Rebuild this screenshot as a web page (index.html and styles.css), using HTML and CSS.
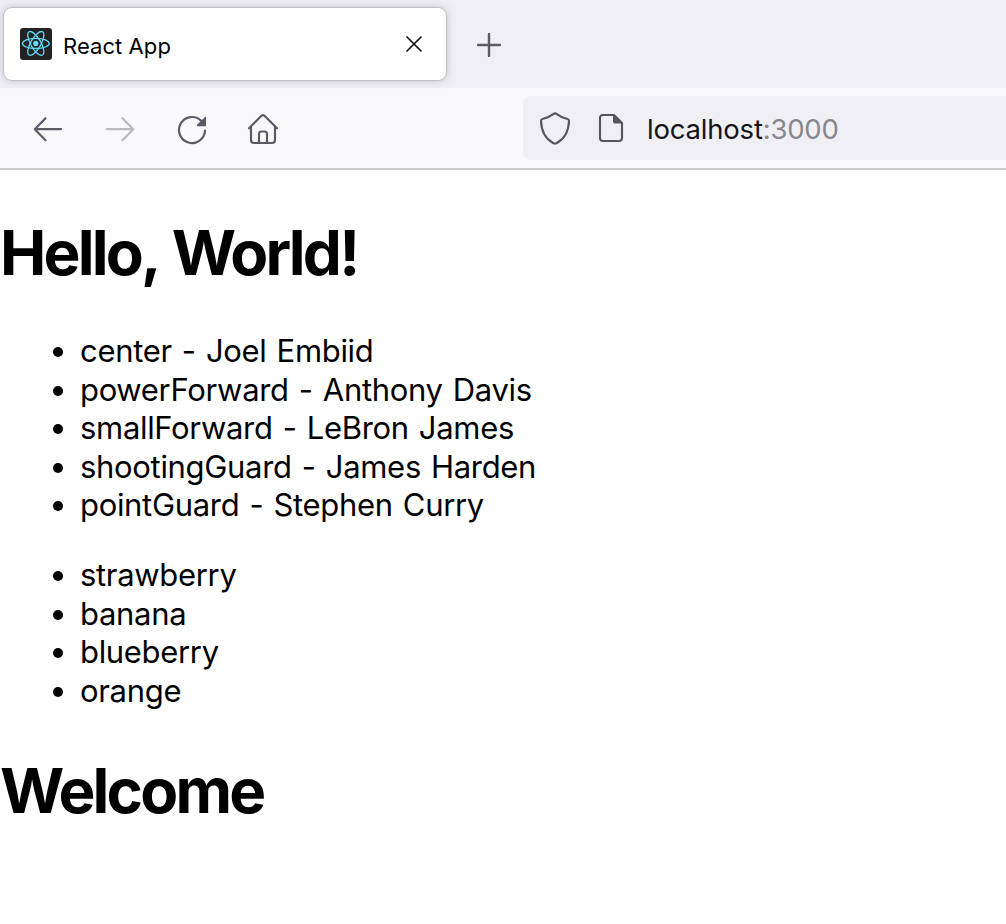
FILE: index.html
```html
<!DOCTYPE html>
<html lang="en">
<head>
<meta charset="utf-8">
<title>React App</title>
<link rel="stylesheet" href="styles.css">
</head>
<body>
<header class="browser">
  <div class="tabs">
    <div class="tab">
      <svg class="favicon" width="32" height="32" viewBox="0 0 32 32">
        <rect width="32" height="32" rx="3" fill="#222"/>
        <g fill="none" stroke="#61dafb" stroke-width="1.3" transform="translate(15.8 15.4)">
          <ellipse rx="13.4" ry="5.1"/>
          <ellipse rx="13.4" ry="5.1" transform="rotate(60)"/>
          <ellipse rx="13.4" ry="5.1" transform="rotate(120)"/>
          <circle r="2.6" fill="#61dafb" stroke="none"/>
        </g>
      </svg>
      <span class="tab-title">React App</span>
      <svg class="tab-close" width="16" height="16" viewBox="0 0 16 16"><path d="M1 1 15 15M15 1 1 15"/></svg>
    </div>
    <svg class="new-tab" width="24" height="24" viewBox="0 0 24 24"><path d="M12 1V23M1 12H23"/></svg>
  </div>
  <div class="toolbar">
    <nav class="nav-icons">
      <svg class="icon" width="32" height="32" viewBox="0 0 32 32"><path d="M29 16.2H3M13.5 5.2 2.8 16.2 13.5 27.2"/></svg>
      <svg class="icon disabled" width="32" height="32" viewBox="0 0 32 32"><path d="M3 16.2H29M18.5 5.2 29.2 16.2 18.5 27.2"/></svg>
      <svg class="icon" width="32" height="32" viewBox="0 0 32 32"><path d="M25.2 7.8A13 13 0 1 0 29 17.5"/><path class="fill" d="M30 4V13.2H21.7Q20 13 21.2 11.6L28.8 4.2Q29.5 3.5 30 4Z"/></svg>
      <svg class="icon" width="32" height="32" viewBox="0 0 32 32"><path d="M2 15.2 14.5 2.8Q16 1.6 17.5 2.8L30 15.2M4 14V27Q4 30 7 30H25Q28 30 28 27V14M12 30V21Q12 18.5 14.5 18.5H17.5Q20 18.5 20 21V30"/></svg>
    </nav>
    <div class="address">
      <svg class="address-icon" width="32" height="34" viewBox="0 0 32 34"><path d="M16 2.2Q22 6.5 28.5 8Q30 8.3 30 10C29.6 21 25 28 18 32Q16 33 14 32C7 28 2.4 21 2 10Q2 8.3 3.5 8Q10 6.5 16 2.2Z"/></svg>
      <svg class="address-icon page" width="26" height="30" viewBox="0 0 26 30"><path d="M16 2H5Q2 2 2 5V25Q2 28 5 28H21Q24 28 24 25V10L16 2Z"/><path class="fill" d="M15 1V8.5Q15 10.5 17 10.5H24.5Z"/></svg>
      <span class="url">localhost<span class="port">:3000</span></span>
    </div>
  </div>
</header>
<main class="page-content">
  <h1 class="heading">Hello, World!</h1>
  <ul class="list">
    <li>center - Joel Embiid</li>
    <li>powerForward - Anthony Davis</li>
    <li>smallForward - LeBron James</li>
    <li>shootingGuard - James Harden</li>
    <li>pointGuard - Stephen Curry</li>
  </ul>
  <ul class="list">
    <li>strawberry</li>
    <li>banana</li>
    <li>blueberry</li>
    <li>orange</li>
  </ul>
  <h1 class="heading welcome">Welcome</h1>
</main>
</body>
</html>
```
FILE: styles.css
```css
* { box-sizing: border-box; }
body {
  margin: 0;
  background: #fff;
  color: #000;
  font-family: Inter, "Liberation Sans", sans-serif;
}
svg { display: block; flex: none; fill: none; }
.tabs {
  display: flex;
  align-items: center;
  height: 88px;
  padding-left: 4px;
  background: #f0eff4;
}
.tab {
  display: flex;
  align-items: center;
  width: 442px;
  height: 72px;
  padding: 0 24px 0 16px;
  border-radius: 8px;
  background: #fff;
  box-shadow: 0 0 0 1px #c2c1ca, 0 0 8px rgba(128, 128, 142, .5);
}
.tab-title {
  margin: 4px 0 0 11px;
  font-size: 22px;
  line-height: 28px;
  letter-spacing: 0.07px;
}
.tab-close { margin-left: auto; stroke: #15141a; stroke-width: 1.7; stroke-linecap: round; }
.new-tab { margin: 2px 0 0 31px; stroke: #5b5b66; stroke-width: 2.4; stroke-linecap: round; }
.toolbar {
  display: flex;
  height: 82px;
  padding-top: 8px;
  background: #f9f9fb;
  border-bottom: 2px solid #cacacd;
}
.nav-icons {
  display: flex;
  gap: 40px;
  width: 523px;
  padding: 17px 0 0 32px;
}
.icon { stroke: #5b5b66; stroke-width: 2.2; stroke-linecap: round; stroke-linejoin: round; }
.icon:last-child { margin-left: -1px; }
.disabled { opacity: .4; }
.icon .fill { fill: #5b5b66; stroke: none; }
.address {
  display: flex;
  align-items: center;
  flex: 1;
  height: 64px;
  padding-left: 16px;
  border-radius: 8px 0 0 8px;
  background: #f0eff4;
}
.address-icon { stroke: #55555b; stroke-width: 2.1; stroke-linejoin: round; }
.address-icon .fill { fill: #55555b; stroke: none; }
.page { margin-left: 27px; }
.url {
  margin: 2px 0 0 23px;
  font-size: 27.5px;
  line-height: 36px;
  color: #15141a;
  letter-spacing: -0.2px;
}
.port { color: #87878d; }
.page-content { display: flow-root; }
.heading {
  margin: 45px 0 41.4px;
  font-size: 62px;
  line-height: 76px;
  font-weight: 700;
  letter-spacing: -2.8px;
  word-spacing: 3px;
}
.list {
  margin: 0 0 31.5px;
  padding-left: 80px;
  font-size: 31px;
  line-height: 38.5px;
  letter-spacing: -0.32px;
  word-spacing: 1.7px;
  font-feature-settings: "calt" 0;
}
.welcome { margin-top: 43px; }
```
